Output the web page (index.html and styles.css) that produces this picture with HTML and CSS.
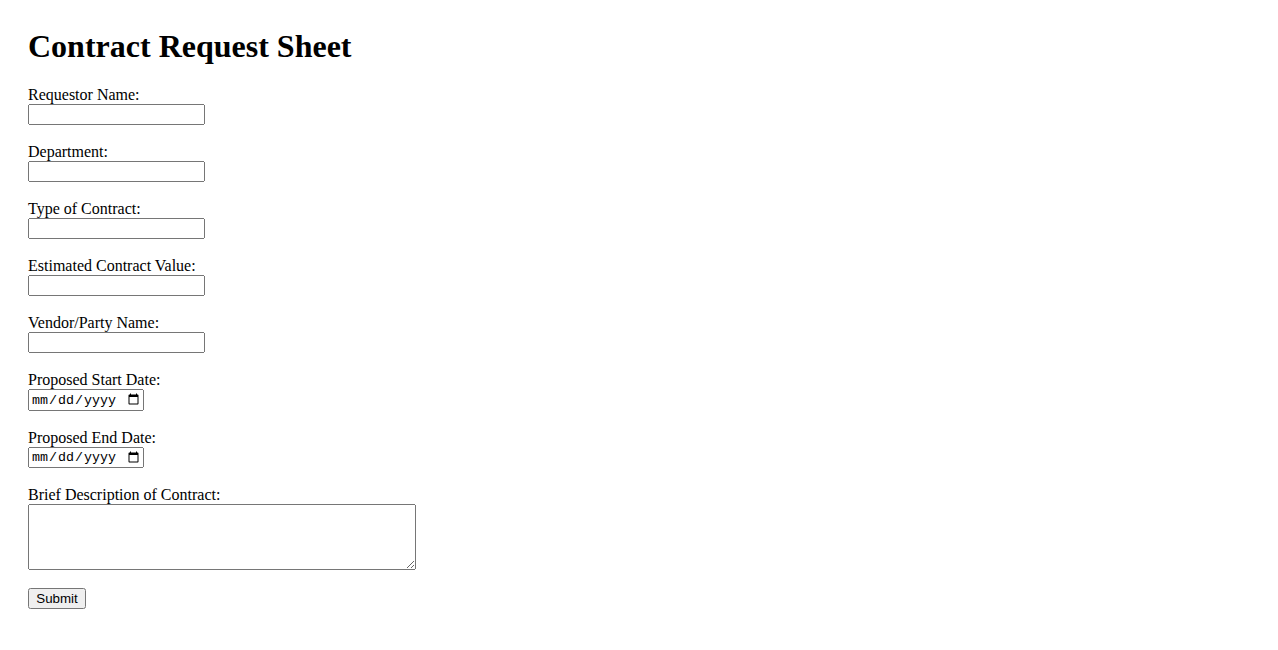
FILE: index.html
```html
<!DOCTYPE html>
<html lang="en">
<head>
<meta charset="utf-8">
<title>Contract Request Sheet</title>
<link rel="stylesheet" href="styles.css">
</head>
<body>
<h1 class="title">Contract Request Sheet</h1>
<form class="form">
  <label for="name">Requestor Name:</label><br>
  <input type="text" id="name" class="field"><br><br>
  <label for="dept">Department:</label><br>
  <input type="text" id="dept" class="field"><br><br>
  <label for="type">Type of Contract:</label><br>
  <input type="text" id="type" class="field"><br><br>
  <label for="value">Estimated Contract Value:</label><br>
  <input type="text" id="value" class="field"><br><br>
  <label for="vendor">Vendor/Party Name:</label><br>
  <input type="text" id="vendor" class="field"><br><br>
  <label for="start">Proposed Start Date:</label><br>
  <input type="date" id="start" class="date"><br><br>
  <label for="end">Proposed End Date:</label><br>
  <input type="date" id="end" class="date"><br><br>
  <label for="desc">Brief Description of Contract:</label><br>
  <textarea id="desc" class="desc"></textarea><br><br>
  <button type="submit" class="submit">Submit</button>
</form>
</body>
</html>
```
FILE: styles.css
```css
body {
  margin: 8px;
  padding: 20px;
  font-family: "Liberation Serif", "Times New Roman", serif;
  font-size: 16px;
  color: #000;
  background: #fff;
}
.title {
  margin: 0 0 21.44px 0;
  font-size: 32px;
  font-weight: bold;
}
.form {
  margin: 0;
}
.field {
  box-sizing: border-box;
  width: 177px;
  font-family: "Liberation Sans", Arial, sans-serif;
}
.date {
  box-sizing: border-box;
  width: 116px;
  font-family: "Liberation Mono", monospace;
}
.desc {
  box-sizing: border-box;
  width: 388px;
  height: 66px;
  vertical-align: bottom;
}
.submit {
  box-sizing: border-box;
  width: 58px;
  font-family: "Liberation Sans", Arial, sans-serif;
}
```
